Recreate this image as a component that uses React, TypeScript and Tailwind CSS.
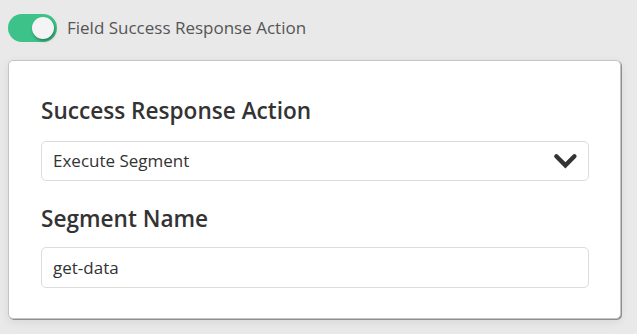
import { useState } from "react";

const FONT = { fontFamily: '"Open Sans", "Noto Sans", sans-serif' };

function Toggle({ on, onChange }: { on: boolean; onChange: (v: boolean) => void }) {
  return (
    <button
      type="button"
      role="switch"
      aria-checked={on}
      onClick={() => onChange(!on)}
      className={`relative h-[28px] w-[49px] shrink-0 rounded-full transition ${
        on ? "bg-[#3dc389]" : "bg-[#c8c8c8]"
      }`}
    >
      <span
        className={`absolute top-[3px] h-[22px] w-[22px] rounded-full bg-[#f4f4f4] shadow-[1px_2px_3px_rgba(0,0,0,0.35)] transition-all ${
          on ? "left-[24px]" : "left-[3px]"
        }`}
      />
    </button>
  );
}

function Chevron() {
  return (
    <svg width="26" height="18" viewBox="0 0 26 18" aria-hidden>
      <polyline
        points="3.5,4 13,13.5 22.5,4"
        fill="none"
        stroke="#333"
        strokeWidth="4.6"
        strokeLinecap="round"
        strokeLinejoin="miter"
      />
    </svg>
  );
}

export default function App() {
  const [enabled, setEnabled] = useState(true);
  const [action, setAction] = useState("Execute Segment");
  const [segment, setSegment] = useState("get-data");

  return (
    <div className="min-h-[334px] w-full bg-[#e9e9e9] px-[8px] pt-[14px]" style={FONT}>
      <div className="flex items-center gap-[10px]">
        <Toggle on={enabled} onChange={setEnabled} />
        <span className="text-[17px] text-[#555]">Field Success Response Action</span>
      </div>

      <div className="mt-[18px] w-[613px] rounded-[5px] border border-[#c4c4c4] bg-white pb-[30px] pl-[32px] pr-[31px] pt-[34px] shadow-[1px_1px_0_#8f8f8f,0_3px_10px_rgba(0,0,0,0.08)]">
        <h2 className="text-[22.6px] font-semibold leading-[31px] text-[#333]">Success Response Action</h2>
        <label className="mt-[15px] flex h-[40px] items-center justify-between rounded-[5px] border border-[#dcdcdc] pl-[11px] pr-[10px]">
          <select
            value={action}
            onChange={(e) => setAction(e.target.value)}
            className="w-full appearance-none bg-transparent text-[17px] text-[#333] outline-none"
          >
            <option>Execute Segment</option>
            <option>Redirect</option>
            <option>Show Message</option>
          </select>
          <Chevron />
        </label>

        <h2 className="mt-[22px] text-[22.6px] font-semibold leading-[31px] text-[#333]">Segment Name</h2>
        <input
          value={segment}
          onChange={(e) => setSegment(e.target.value)}
          className="mt-[13px] block h-[41px] w-full rounded-[5px] border border-[#dcdcdc] px-[11px] text-[17px] text-[#333] outline-none"
        />
      </div>
    </div>
  );
}
